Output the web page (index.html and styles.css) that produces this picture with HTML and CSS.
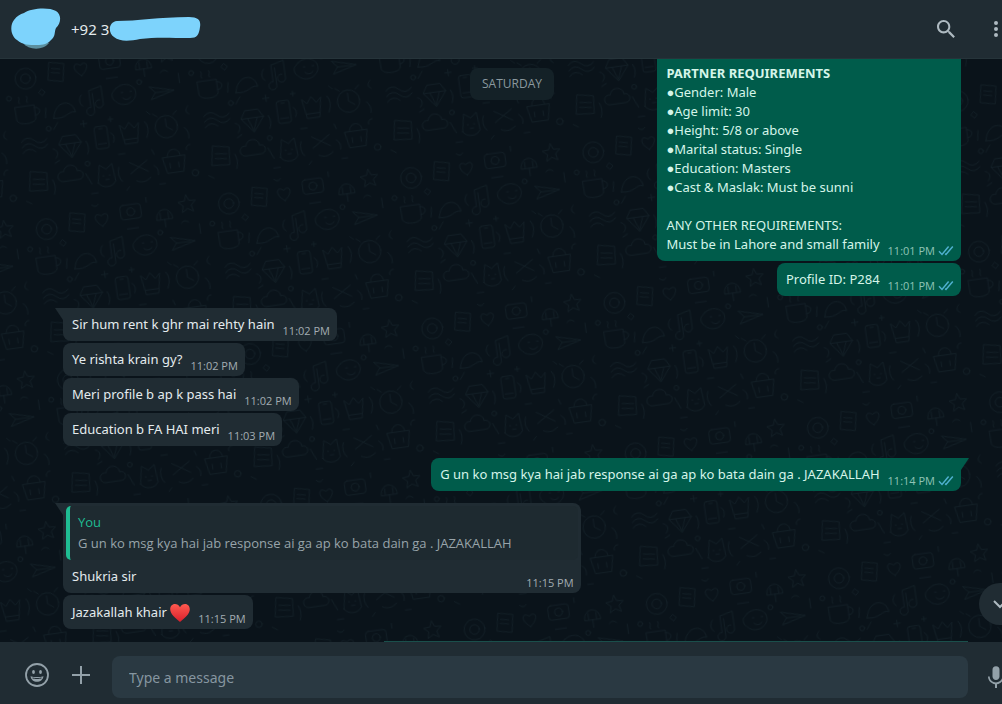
FILE: index.html
```html
<!DOCTYPE html>
<html lang="en">
<head>
    <meta charset="UTF-8">
    <meta name="viewport" content="width=device-width, initial-scale=1.0">
    <title>Chat</title>
    <link rel="stylesheet" href="styles.css">
</head>
<body>
<div class="app">

    <!-- shared icons -->
    <svg class="defs" width="0" height="0" aria-hidden="true">
        <symbol id="ticks" viewBox="0 0 16 11">
            <path d="M1 6.2 4 9.4 10.6 1.4M7.2 8.6 8 9.4 14.8 1.4" fill="none" stroke="currentColor" stroke-width="1.5"/>
        </symbol>
    </svg>

    <header class="header">
        <svg class="avatar" width="50" height="42" viewBox="0 0 50 42" aria-hidden="true">
            <path d="M12 35C17 42 32 43 38 35Z" fill="#5b8f9f"/>
            <path d="M13 5C20 0 38-1 45 3c6 4 5 12 0 17-2 4 0 8-5 12-3 4-8 5-14 5-8 0-14 0-20-5C-1 27-1 17 3 12c3-4 6-6 10-7Z" fill="#7dd3fc"/>
        </svg>
        <h1 class="name">+92 3</h1>
        <svg class="scribble" width="92" height="25" viewBox="0 0 92 25" aria-hidden="true">
            <path d="M8 4C28 4 50 0 80 0c10 0 12 4 11 10-1 8-3 11-10 11-20 0-35-1-50 1-10 2-20 3-26-2C-1 16-1 5 8 4Z" fill="#7dd3fc"/>
        </svg>
        <div class="header-actions">
            <button class="icon-btn" aria-label="Search">
                <svg width="24" height="24" viewBox="0 0 24 24"><path fill="currentColor" d="M15.9 14.3H15l-.3-.3c1-1.1 1.6-2.7 1.6-4.3 0-3.7-3-6.700-6.700-6.700S3 6 3 9.700s3 6.700 6.700 6.700c1.600 0 3.200-.6 4.300-1.600l.3.3v.8l5.100 5.100 1.500-1.500-5-5.200zm-6.200 0c-2.600 0-4.600-2.100-4.600-4.600s2.100-4.600 4.600-4.600 4.600 2.100 4.600 4.600-2 4.600-4.600 4.600z"/></svg>
            </button>
            <button class="icon-btn" aria-label="Menu">
                <svg width="24" height="24" viewBox="0 0 24 24"><path fill="currentColor" d="M12 8a2 2 0 1 0 0-4 2 2 0 0 0 0 4zm0 6a2 2 0 1 0 0-4 2 2 0 0 0 0 4zm0 6a2 2 0 1 0 0-4 2 2 0 0 0 0 4z"/></svg>
            </button>
        </div>
    </header>

    <main class="chat">
        <!-- wallpaper doodles -->
        <svg class="wallpaper" width="100%" height="100%" aria-hidden="true">
            <pattern id="doodles" width="230" height="190" patternUnits="userSpaceOnUse" patternTransform="rotate(-8) scale(.8)">
                <g fill="none" stroke="#121e26" stroke-width="1.2" stroke-linecap="round">
                    <circle cx="28" cy="30" r="13"/><circle cx="28" cy="30" r="6"/>
                    <path d="M60 14l18 4-4 22-18-4zM62 22l10 2M61 27l10 2"/>
                    <path d="M98 36c-12-8-9-20 0-13 9-7 12 5 0 13z"/>
                    <rect x="122" y="14" width="26" height="18" rx="4"/><circle cx="135" cy="23" r="5"/>
                    <path d="M166 38c0-16 20-16 20 0zM176 38v10M171 30v8M181 30v8"/>
                    <path d="M206 12l3 7 8 1-6 5 2 8-7-4-7 4 2-8-6-5 8-1z"/>
                    <path d="M10 64h24v16c0 8-24 8-24 0zM34 67c8 0 8 10 0 10M16 60c-2-4 2-4 0-8M26 60c-2-4 2-4 0-8"/>
                    <path d="M56 84c4-22 26-22 28-4-8-4-12 8-28 4zM60 90l-6 8"/>
                    <path d="M108 60v22a5 5 0 1 1-4-5V56l16-4v22a5 5 0 1 1-4-5"/>
                    <path d="M138 58c10-8 24-2 24 8s-14 18-24 10-6-14 0-18zM144 64h2M155 64h2M145 71q5 5 10 0"/>
                    <path d="M180 62l30 8-30 8 6-8zM186 70h18"/>
                    <path d="M12 108q8-8 16 0t16 0M12 115q8-8 16 0t16 0M12 122q8-8 16 0"/>
                    <path d="M64 108h16l6 10-14 18-14-18zM58 118h28M66 118l6 16 6-16"/>
                    <rect x="104" y="102" width="16" height="28" rx="3"/><path d="M107 124h10M110 105h4"/>
                    <path d="M140 128l-4-24 6 6 6-8 6 8 6-6-4 24zM140 123h16"/>
                    <circle cx="194" cy="114" r="14"/><path d="M194 104v10l7 5M184 100l-5-4M204 100l5-4"/>
                    <path d="M18 146l20 4-2 22-22-2zM20 156l14 2M19 162l14 2"/>
                    <path d="M56 164c-8-2-6-14 3-12 2-10 17-9 17 1 9-1 9 11 1 11z"/>
                    <path d="M100 172l4-22 8 6 8-6 2 22c-4 8-18 8-22 0zM107 164h1M115 164h1M110 169h4"/>
                    <path d="M142 152l22 14M164 152l-22 14M148 176c8 4 12 2 18-2"/>
                    <path d="M184 152h28l-4 20h-20zM190 152c0-12 16-12 16 0M192 160v6M203 160v6"/>
                    <path d="M46 46l4 4-4 4-4-4zM92 92v8M88 96h8M126 92v6M123 95h6M172 92l4 4M224 92c-4 3-4 8 0 10M88 8c3 3 6 3 8 0M156 8v6M196 46c3-3 6-3 9 0M50 140l6-3M130 140h8M172 140l2 6M220 140c-4 0-6 3-5 6M90 184h8M8 182l6 4M134 186l4-4M176 184h7"/>
                    <path d="M48 70l-2 12M94 60c-4 4-4 10 0 14M128 44h14M218 50v12M50 122c6 2 6 8 2 12M92 118q4 8 0 16M124 112q6 4 2 12M168 104q6 8 0 20M216 118q6 6 4 14M44 160q4 8 0 18M86 158l6 14M128 156q-4 10 2 18M172 160q6 4 4 12"/>
                    <circle cx="48" cy="96" r="3"/><circle cx="168" cy="54" r="3"/><circle cx="90" cy="146" r="3"/><circle cx="222" cy="176" r="4"/><circle cx="4" cy="52" r="3"/>
                </g>
            </pattern>
            <rect width="100%" height="100%" fill="url(#doodles)"/>
        </svg>

        <div class="day">SATURDAY</div>

        <div class="messages">
            <div class="msg out cut-top">
                <p class="text"><strong>PARTNER REQUIREMENTS</strong><br>
                    ●Gender: Male<br>
                    ●Age limit: 30<br>
                    ●Height: 5/8 or above<br>
                    ●Marital status: Single<br>
                    ●Education: Masters<br>
                    ●Cast &amp; Maslak: Must be sunni<br>
                    <br>
                    ANY OTHER REQUIREMENTS:<br>
                    Must be in Lahore and small family</p>
                <span class="time">11:01 PM <svg class="ticks"><use href="#ticks"/></svg></span>
            </div>
            <div class="msg out">
                <p class="text">Profile ID: P284</p>
                <span class="time">11:01 PM <svg class="ticks"><use href="#ticks"/></svg></span>
            </div>

            <div class="msg in first">
                <p class="text">Sir hum rent k ghr mai rehty hain</p>
                <span class="time">11:02 PM</span>
            </div>
            <div class="msg in">
                <p class="text">Ye rishta krain gy?</p>
                <span class="time">11:02 PM</span>
            </div>
            <div class="msg in">
                <p class="text">Meri profile b ap k pass hai</p>
                <span class="time">11:02 PM</span>
            </div>
            <div class="msg in">
                <p class="text">Education b FA HAI meri</p>
                <span class="time">11:03 PM</span>
            </div>

            <div class="msg out first">
                <p class="text">G un ko msg kya hai jab response ai ga ap ko bata dain ga . JAZAKALLAH</p>
                <span class="time">11:14 PM <svg class="ticks"><use href="#ticks"/></svg></span>
            </div>

            <div class="msg in first has-quote">
                <blockquote class="quote">
                    <span class="quote-name">You</span>
                    <span class="quote-text">G un ko msg kya hai jab response ai ga ap ko bata dain ga . JAZAKALLAH</span>
                </blockquote>
                <p class="text">Shukria sir</p>
                <span class="time">11:15 PM</span>
            </div>
            <div class="msg in">
                <p class="text with-heart">Jazakallah khair <svg class="heart" width="20" height="20" viewBox="0 0 20 20" role="img" aria-label="heart">
                    <defs><linearGradient id="red" x1="0" y1="0" x2="0" y2="1"><stop offset="0" stop-color="#ff5a4f"/><stop offset="1" stop-color="#d81f2c"/></linearGradient></defs>
                    <path fill="url(#red)" d="M10 4.200C11.200 1.800 13 1 15 1c3 0 4.800 2.400 4.800 5.200 0 5.200-5.300 8.300-9.800 12.800C5.500 14.500.2 11.400.2 6.200.2 3.400 2 1 5 1c2 0 3.800.8 5 3.200z"/>
                </svg></p>
                <span class="time">11:15 PM</span>
            </div>

            <!-- next message, still below the fold -->
            <div class="peek"></div>
        </div>

        <button class="scroll-down" aria-label="Scroll to bottom">
            <svg width="20" height="20" viewBox="0 0 20 20"><path d="M4 7l6 6 6-6" fill="none" stroke="currentColor" stroke-width="2"/></svg>
        </button>
    </main>

    <footer class="composer">
        <button class="icon-btn tool" aria-label="Emoji">
            <svg width="26" height="26" viewBox="0 0 26 26">
                <circle cx="13" cy="13" r="11" fill="none" stroke="currentColor" stroke-width="1.8"/>
                <ellipse cx="9.5" cy="10" rx="1.4" ry="1.9" fill="currentColor"/>
                <ellipse cx="16.5" cy="10" rx="1.4" ry="1.9" fill="currentColor"/>
                <path d="M6.500 14.200c4 1.200 9 1.200 13 0-.6 3.600-3.300 5.600-6.500 5.600s-5.900-2-6.500-5.600z" fill="currentColor"/>
                <path d="M8.500 16c3 .7 6 .7 9 0" fill="none" stroke="#202c33" stroke-width="1"/>
            </svg>
        </button>
        <button class="icon-btn tool" aria-label="Attach">
            <svg width="26" height="26" viewBox="0 0 26 26"><path d="M13 4v18M4 13h18" fill="none" stroke="currentColor" stroke-width="2"/></svg>
        </button>
        <input class="input" type="text" placeholder="Type a message" aria-label="Type a message">
        <button class="icon-btn mic" aria-label="Record voice message">
            <svg width="24" height="24" viewBox="0 0 24 24"><path fill="currentColor" d="M12 15c1.900 0 3.500-1.600 3.500-3.500V4.700a3.500 3.500 0 0 0-7 0v6.800C8.500 13.400 10.100 15 12 15zm6.300-3.500c0 3.500-3 5.900-6.300 5.900s-6.300-2.400-6.300-5.900H4c0 3.900 3.200 7.200 7 7.800V23h2v-3.700c3.800-.6 7-3.900 7-7.800z"/></svg>
        </button>
    </footer>

</div>
</body>
</html>
```
FILE: styles.css
```css
* {
    box-sizing: border-box;
}
body {
    margin: 0;
    overflow: hidden;
    background-color: #0a131a;
    color: #e4ebee;
    font-family: "Noto Sans", "Open Sans", sans-serif;
    font-size: 13px;
}
button {
    border: 0;
    padding: 0;
    background: none;
    color: inherit;
    cursor: pointer;
}
/* the app runs a little past the right edge of the window */
.app {
    display: flex;
    flex-direction: column;
    width: calc(100% + 16px);
    height: 100vh;
}
.defs {
    position: absolute;
}

/* Header */
.header {
    display: flex;
    align-items: center;
    flex: none;
    height: 58px;
    padding: 0 10px 0 11px;
    background-color: #202c33;
    box-shadow: 0 1px 0 #26343a;
    z-index: 2;
}
.avatar {
    margin-right: 10px;
}
.name {
    margin: 0;
    font-size: 15px;
    font-weight: 400;
    line-height: 20px;
}
.header-actions {
    display: flex;
    gap: 26px;
    margin-left: auto;
}
.icon-btn {
    display: flex;
    color: #aebac1;
}

/* Conversation */
.chat {
    position: relative;
    flex: 1;
    min-height: 0;
    overflow: hidden;
}
.wallpaper {
    position: absolute;
    left: 0;
    top: 0;
}
.messages {
    position: relative;
    display: flex;
    flex-direction: column;
    justify-content: flex-end;
    gap: 2px;
    height: 100%;
    padding: 0 57px 0 63px;
}
.day {
    position: absolute;
    top: 10px;
    left: 63px;
    right: 57px;
    width: fit-content;
    margin: 0 auto;
    padding: 6px 12px;
    border-radius: 8px;
    background-color: #142127;
    color: #8b999f;
    font-family: "Open Sans", sans-serif;
    font-size: 12px;
    line-height: 20px;
    z-index: 1;
}
.msg {
    position: relative;
    display: flex;
    align-items: flex-end;
    justify-content: space-between;
    flex: none;
    column-gap: 8px;
    padding: 7px 7px 3px 9px;
    border-radius: 8px;
}
.in {
    align-self: flex-start;
    background-color: #202c33;
}
.out {
    align-self: flex-end;
    background-color: #005c4b;
    color: #d5f5e9;
}
.text {
    margin: 0;
    padding-bottom: 4px;
    line-height: 19px;
}
.with-heart {
    line-height: 20px;
}
.time {
    display: flex;
    align-items: center;
    gap: 3px;
    color: #a3adb2;
    font-family: "Open Sans", sans-serif;
    font-size: 11px;
    line-height: 15px;
}
.out .time {
    color: #8fc4b6;
}
.ticks {
    width: 16px;
    height: 11px;
    color: #4fb0cf;
}
.cut-top {
    border-top-left-radius: 0;
    border-top-right-radius: 0;
}

/* First message of a group gets a tail */
.first {
    margin-top: 10px;
}
.first::before {
    content: "";
    position: absolute;
    top: 0;
    width: 8px;
    height: 12px;
    background-color: inherit;
}
.in.first {
    border-top-left-radius: 0;
}
.in.first::before {
    right: 100%;
    clip-path: polygon(0 0, 100% 0, 100% 100%);
}
.out.first {
    border-top-right-radius: 0;
}
.out.first::before {
    left: 100%;
    clip-path: polygon(0 0, 100% 0, 0 100%);
}

/* Quoted reply */
.has-quote {
    display: grid;
    grid-template-columns: 1fr auto;
    padding-top: 3px;
}
.quote {
    display: flex;
    flex-direction: column;
    grid-column: 1 / -1;
    margin: 0 -4px 7px -6px;
    padding: 6px 66px 6px 8px;
    border-left: 4px solid #1fbd93;
    border-radius: 5px;
    background-color: #1e2a30;
    font-family: "Open Sans", sans-serif;
    line-height: 21px;
}
.quote-name {
    color: #1fbd93;
}
.quote-text {
    color: #98a4aa;
}
.heart {
    margin: -2px 0;
    vertical-align: -4px;
}
.peek {
    align-self: flex-end;
    flex: none;
    width: 65%;
    height: 1px;
    margin: 10px -7px 0 0;
    background-color: #1a4f4b;
}
.scroll-down {
    position: absolute;
    right: -3px;
    bottom: 17px;
    display: flex;
    align-items: center;
    justify-content: center;
    width: 42px;
    height: 42px;
    border-radius: 50%;
    background-color: #202c33;
    color: #aebac1;
}

/* Composer */
.composer {
    display: flex;
    align-items: center;
    flex: none;
    gap: 18px;
    height: 62px;
    padding: 8px 10px 0 24px;
    background-color: #202c33;
}
.composer .icon-btn {
    color: #93a1a9;
}
.composer .tool {
    margin-bottom: 4px;
}
.input {
    flex: 1;
    height: 42px;
    margin: 0 -2px 0 0;
    padding: 0 17px;
    border: 0;
    border-radius: 8px;
    background-color: #2a3942;
    color: #e4ebee;
    font: inherit;
    font-size: 14px;
}
.input::placeholder {
    color: #8696a0;
    opacity: 1;
}
```
